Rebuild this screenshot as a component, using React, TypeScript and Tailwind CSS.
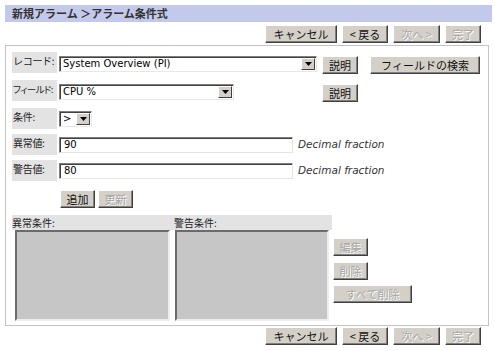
import React from "react";

const jp = "font-['Noto_Sans_CJK_JP',sans-serif]";
const latin = "font-['DejaVu_Sans','Noto_Sans_CJK_JP',sans-serif]";

function Btn({
  children,
  className = "",
  disabled = false,
}: {
  children: React.ReactNode;
  className?: string;
  disabled?: boolean;
}) {
  return (
    <div
      className={`h-[18px] shrink-0 whitespace-nowrap flex items-center justify-center bg-[#d4d0c8] border border-t-white border-l-white border-r-[#404040] border-b-[#404040] shadow-[inset_-1px_-1px_0_#808080] text-[11px] leading-none ${jp} ${
        disabled ? "text-[#a6a6a6] [text-shadow:1px_1px_0_#ffffff]" : "text-[#111]"
      } ${className}`}
    >
      {children}
    </div>
  );
}

function Arrow() {
  return (
    <div className="w-[14px] h-[12px] my-auto mr-[1px] shrink-0 flex items-center justify-center bg-[#d4d0c8] border border-t-white border-l-white border-r-[#404040] border-b-[#404040]">
      <svg width="7" height="4" viewBox="0 0 7 4">
        <path d="M0 0h7L3.5 4z" fill="#000" />
      </svg>
    </div>
  );
}

function Select({ value, className = "" }: { value: string; className?: string }) {
  return (
    <div
      className={`h-[16px] flex items-stretch bg-white border border-t-[#808080] border-l-[#808080] border-r-[#e8e8e8] border-b-[#e8e8e8] shadow-[inset_1px_1px_0_#404040] ${className}`}
    >
      <div className={`flex-1 pl-[3px] text-[10px] leading-[14px] text-black ${latin}`}>{value}</div>
      <Arrow />
    </div>
  );
}

function Input({ value }: { value: string }) {
  return (
    <div
      className={`w-[234px] h-[16px] bg-white border border-t-[#808080] border-l-[#808080] border-r-[#e4e4e4] border-b-[#e4e4e4] shadow-[inset_1px_1px_0_#404040] pl-[4px] text-[10px] leading-[14px] text-black ${latin}`}
    >
      {value}
    </div>
  );
}

function Label({ children }: { children: React.ReactNode }) {
  return (
    <div
      className={`w-[45px] h-[21px] shrink-0 whitespace-nowrap bg-[#e3e3e3] pl-[1px] pt-[3px] text-[10px] leading-[12px] tracking-[-0.3px] text-[#222] ${jp}`}
    >
      {children}
    </div>
  );
}

function NavButtons({ className = "" }: { className?: string }) {
  return (
    <div className={`w-[476px] flex justify-end gap-[5px] ${className}`}>
      <Btn className="w-[72px]">キャンセル</Btn>
      <Btn className="w-[46px]">&lt;&nbsp;戻る</Btn>
      <Btn className="w-[47px]" disabled>
        次へ&nbsp;&gt;
      </Btn>
      <Btn className="w-[36px]" disabled>
        完了
      </Btn>
    </div>
  );
}

export default function App() {
  return (
    <div className="w-[495px] h-[351px] bg-white pt-[5px] pl-[5px] overflow-hidden">
      {/* title bar */}
      <div
        className={`w-[487px] h-[17px] bg-[#c3c9ea] pl-[7px] flex items-center text-[11px] font-bold text-[#333] ${jp}`}
      >
        新規アラーム ＞アラーム条件式
      </div>

      <NavButtons className="mt-[3px]" />

      {/* main panel */}
      <div className="mt-[2px] w-[484px] h-[281px] border border-[#c4c4c4] pl-[6px] pt-[6px]">
        <div className="flex items-start">
          <Label>レコード:</Label>
          <Select value="System Overview (PI)" className="ml-[2px] mt-[4px] w-[258px]" />
          <Btn className="ml-[5px] mt-[4px] w-[36px]">説明</Btn>
          <Btn className="ml-[12px] mt-[4px] w-[110px]">フィールドの検索</Btn>
        </div>

        <div className="mt-[6px] flex items-start">
          <Label>
            <span className="text-[9.5px] tracking-[-0.6px] [font-feature-settings:'palt']">フィールド:</span>
          </Label>
          <Select value="CPU %" className="ml-[2px] mt-[4px] w-[175px]" />
          <Btn className="ml-[88px] mt-[4px] w-[36px]">説明</Btn>
        </div>

        <div className="mt-[6px] flex items-start">
          <Label>条件:</Label>
          <Select value=">" className="ml-[2px] mt-[3px] w-[33px]" />
        </div>

        <div className="mt-[5px] flex items-start">
          <Label>異常値:</Label>
          <div className="ml-[2px] mt-[3px] flex items-center">
            <Input value="90" />
            <span className={`ml-[5px] text-[10.5px] italic text-[#333] ${latin}`}>Decimal fraction</span>
          </div>
        </div>

        <div className="mt-[5px] flex items-start">
          <Label>警告値:</Label>
          <div className="ml-[2px] mt-[3px] flex items-center">
            <Input value="80" />
            <span className={`ml-[5px] text-[10.5px] italic text-[#333] ${latin}`}>Decimal fraction</span>
          </div>
        </div>

        <div className="mt-[9px] ml-[48px] flex gap-[3px]">
          <Btn className="w-[35px]">追加</Btn>
          <Btn className="w-[35px]" disabled>
            更新
          </Btn>
        </div>

        {/* condition lists */}
        <div className="mt-[7px] flex items-start">
          <div className="w-[320px]">
            <div className={`h-[15px] bg-[#e3e3e3] flex text-[10px] leading-[15px] text-[#222] ${jp}`}>
              <div className="w-[162px]">異常条件:</div>
              <div>警告条件:</div>
            </div>
            <div className="flex gap-[5px] pl-[3px]">
              <div className="w-[155px] h-[91px] bg-[#c6c6c6] border-2 border-t-[#6b6b6b] border-l-[#6b6b6b] border-r-[#eeeeee] border-b-[#eeeeee]" />
              <div className="w-[154px] h-[91px] bg-[#c6c6c6] border-2 border-t-[#6b6b6b] border-l-[#6b6b6b] border-r-[#eeeeee] border-b-[#eeeeee]" />
            </div>
          </div>
          <div className="ml-[1px] pt-[23px] flex flex-col items-start">
            <Btn className="w-[35px]" disabled>
              編集
            </Btn>
            <Btn className="mt-[6px] w-[35px]" disabled>
              削除
            </Btn>
            <Btn className="mt-[5px] w-[79px]" disabled>
              すべて削除
            </Btn>
          </div>
        </div>
      </div>

      <NavButtons className="mt-[1px]" />
    </div>
  );
}
